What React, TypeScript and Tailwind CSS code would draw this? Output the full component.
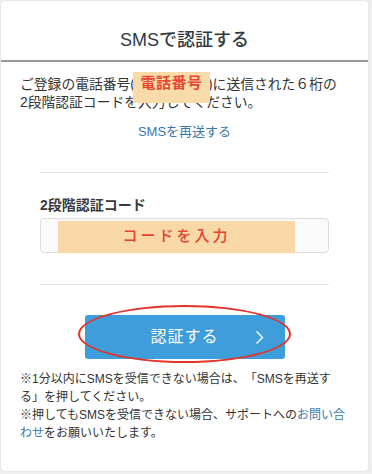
import React from 'react';

const font = "font-['Liberation_Sans','Noto_Sans_CJK_JP',sans-serif]";

export default function App() {
  return (
    <div className={`min-h-screen bg-[#efefef] ${font}`}>
      <div className="w-[369px] h-[472px] bg-white rounded-[5px] border border-[#e8e8e8] flex flex-col overflow-hidden">
        {/* header */}
        <div className="h-[61px] pt-[27px] border-b-2 border-[#999] text-center">
          <h1 className="text-[18px] leading-[24px] font-medium text-[#2f3a44]">SMSで認証する</h1>
        </div>

        {/* body */}
        <div className="px-[19px] pt-[14px] text-[#333]">
          <p className="text-[13.8px] leading-[18px]">
            ご登録の電話番号(
            <span className="relative inline-block w-[73px] h-[18px] align-top">
              <span className="absolute left-[-2px] right-[-2px] top-[-4px] h-[31px] bg-[#f9dba9] flex justify-center pt-[1px]">
                <span className="text-[15px] leading-[20px] font-bold text-[#e8452f] tracking-[0.5px]">電話番号</span>
              </span>
            </span>
            )に送信された６桁の
            <br />
            2段階認証コードを入力してください。
          </p>
          <div className="mt-[7px] text-center">
            <a className="text-[13px] leading-[18px] text-[#3a78ae]">SMSを再送する</a>
          </div>

          <div className="mx-[20px] mt-[29px] border-t border-[#e6e6e6] pt-[22px]">
            <label className="block text-[14px] leading-[20px] font-bold text-[#3a3a3a]">2段階認証コード</label>
            <div className="relative mt-[3px] h-[35px] border border-[#dedede] rounded-[4px] bg-[#fafafa]">
              <div className="absolute left-[17px] w-[237px] top-[2px] bottom-[-1px] bg-[#f8d8a6] flex justify-center pt-[5px]">
                <span className="text-[15px] leading-[20px] font-medium text-[#e8412c] tracking-[3px]">コードを入力</span>
              </div>
            </div>
          </div>

          <div className="mx-[20px] mt-[31px] border-t border-[#e6e6e6] pt-[30px] flex justify-center">
            <div className="relative">
              <button className="w-[200px] h-[44px] bg-[#3d9edb] rounded-[3px] flex items-center justify-center relative text-white">
                <span className="text-[16px] leading-[20px] tracking-[1px]">認証する</span>
                <svg className="absolute left-[170px] top-[15px]" width="9" height="15" viewBox="0 0 9 15" fill="none">
                  <path d="M1.5 1.5 L7.5 7.5 L1.5 13.5" stroke="white" strokeWidth="1.4" />
                </svg>
              </button>
              <div className="absolute left-[-7px] top-[-10px] w-[213px] h-[58px] rounded-[50%] border-2 border-[#e2342a] pointer-events-none" />
            </div>
          </div>

          <div className="mt-[11px] -mr-[4px] text-[12px] leading-[18px] text-[#333] [text-spacing-trim:space-all]">
            <p>
              ※1分以内にSMSを受信できない場合は、「SMSを再送す
              <br />
              る」を押してください。
            </p>
            <p>
              ※押してもSMSを受信できない場合、サポートへの<a className="text-[#3a78ae]">お問い合<br />わせ</a>をお願いいたします。
            </p>
          </div>
        </div>
      </div>
    </div>
  );
}
